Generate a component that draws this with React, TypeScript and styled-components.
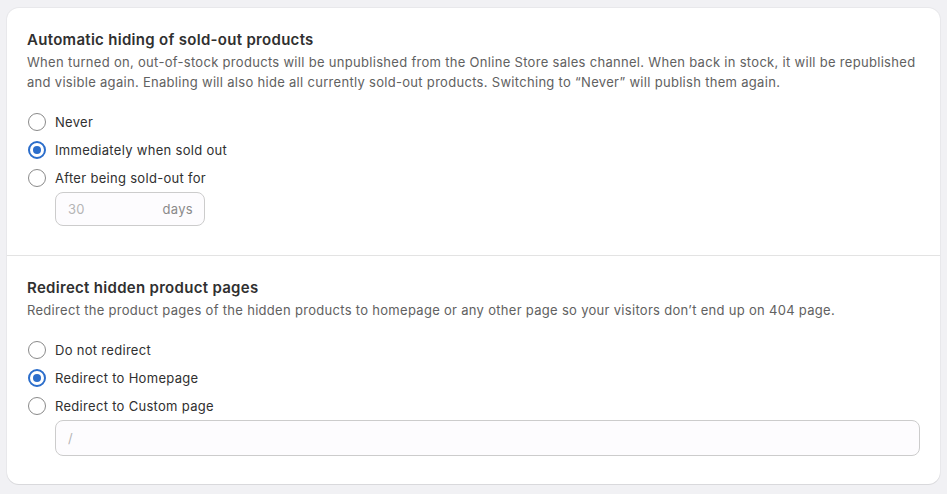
import { useState } from "react";
import styled, { createGlobalStyle } from "styled-components";

const GlobalStyle = createGlobalStyle`
  html, body {
    margin: 0;
    padding: 0;
    background: #f1f1f4;
  }
  body {
    font-family: Inter, "Noto Sans", "Liberation Sans", sans-serif;
    color: #303030;
    letter-spacing: 0.3px;
    -webkit-font-smoothing: antialiased;
  }
`;

const Page = styled.div`
  padding: 8px 7px 10px 7px;
`;

const Card = styled.div`
  background: #ffffff;
  border-radius: 12px;
  box-shadow: 0 1px 0 rgba(26, 26, 26, 0.07), 0 0 0 1px rgba(26, 26, 26, 0.04);
  overflow: hidden;
`;

const Section = styled.section`
  padding: 20px 20px 29px 20px;
  & + & {
    border-top: 1px solid #e3e3e3;
    padding-bottom: 28px;
  }
`;

const Title = styled.h2`
  margin: 0;
  font-size: 15px;
  line-height: 24px;
  font-weight: 600;
  color: #303030;
`;

const Description = styled.p`
  margin: 0;
  font-size: 13px;
  line-height: 20px;
  color: #616161;
`;

const Options = styled.div`
  margin-top: 16px;
  display: flex;
  flex-direction: column;
`;

const Row = styled.label`
  display: flex;
  align-items: center;
  gap: 9px;
  height: 28px;
  padding-left: 1px;
  font-size: 13px;
  color: #303030;
  cursor: pointer;
`;

const Circle = styled.span<{ $on: boolean }>`
  box-sizing: border-box;
  width: 18px;
  height: 18px;
  border-radius: 50%;
  flex: none;
  background: #fff;
  border: ${(p) => (p.$on ? "2px solid #2c6ecb" : "1.5px solid #8a8a8a")};
  display: flex;
  align-items: center;
  justify-content: center;
  &::after {
    content: "";
    width: 8px;
    height: 8px;
    border-radius: 50%;
    background: #2c6ecb;
    display: ${(p) => (p.$on ? "block" : "none")};
  }
`;

const Field = styled.div<{ $width?: string; $height: number }>`
  box-sizing: border-box;
  margin-left: 28px;
  width: ${(p) => p.$width ?? "auto"};
  height: ${(p) => p.$height}px;
  border: 1px solid #cccccc;
  border-radius: 8px;
  background: #fdfcfe;
  display: flex;
  align-items: center;
  padding: 0 11px 0 12px;
  font-size: 13px;
`;

const FieldInput = styled.input`
  flex: 1;
  min-width: 0;
  border: none;
  outline: none;
  background: transparent;
  font: inherit;
  letter-spacing: inherit;
  color: #303030;
  padding: 0;
  &::placeholder {
    color: #b5b5b5;
  }
`;

const Suffix = styled.span`
  color: #8a8a8a;
`;

type Option = { id: string; label: string };

const Radio = ({ label, on, onPick }: { label: string; on: boolean; onPick: () => void }) => (
  <Row onClick={onPick}>
    <Circle $on={on} />
    {label}
  </Row>
);

const hideOptions: Option[] = [
  { id: "never", label: "Never" },
  { id: "now", label: "Immediately when sold out" },
  { id: "after", label: "After being sold-out for" },
];

const redirectOptions: Option[] = [
  { id: "none", label: "Do not redirect" },
  { id: "home", label: "Redirect to Homepage" },
  { id: "custom", label: "Redirect to Custom page" },
];

export default function App() {
  const [hide, setHide] = useState("now");
  const [redirect, setRedirect] = useState("home");

  return (
    <>
      <GlobalStyle />
      <Page>
        <Card>
          <Section>
            <Title>Automatic hiding of sold-out products</Title>
            <Description>
              When turned on, out-of-stock products will be unpublished from the Online Store sales
              channel. When back in stock, it will be republished and visible again. Enabling will
              also hide all currently sold-out products. Switching to “Never” will publish them
              again.
            </Description>
            <Options>
              {hideOptions.map((o) => (
                <Radio key={o.id} label={o.label} on={hide === o.id} onPick={() => setHide(o.id)} />
              ))}
              <Field $width="150px" $height={34}>
                <FieldInput placeholder="30" />
                <Suffix>days</Suffix>
              </Field>
            </Options>
          </Section>
          <Section>
            <Title>Redirect hidden product pages</Title>
            <Description>
              Redirect the product pages of the hidden products to homepage or any other page so
              your visitors don’t end up on 404 page.
            </Description>
            <Options>
              {redirectOptions.map((o) => (
                <Radio
                  key={o.id}
                  label={o.label}
                  on={redirect === o.id}
                  onPick={() => setRedirect(o.id)}
                />
              ))}
              <Field $height={36}>
                <FieldInput placeholder="/" />
              </Field>
            </Options>
          </Section>
        </Card>
      </Page>
    </>
  );
}
